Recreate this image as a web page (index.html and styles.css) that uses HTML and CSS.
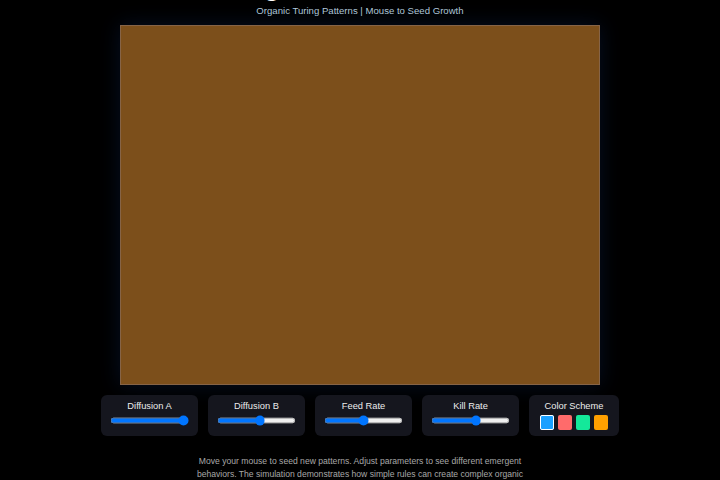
FILE: index.html
```html
<!DOCTYPE html>
<html lang="en">
<head>
    <meta charset="UTF-8">
    <meta name="viewport" content="width=device-width, initial-scale=1.0">
    <link rel="stylesheet" href="styles.css">
    <title>Living Reaction Diffusion</title>
</head>
<body>
    <div class="app">
        <h1 class="title">Living Reaction Diffusion</h1>
        <p class="subtitle">Organic Turing Patterns | Mouse to Seed Growth</p>

        <canvas class="sim" width="480" height="360"></canvas>

        <div class="controls">
            <div class="control">
                <label for="da">Diffusion A</label>
                <input type="range" id="da" min="0" max="100" value="100">
            </div>
            <div class="control">
                <label for="db">Diffusion B</label>
                <input type="range" id="db" min="0" max="100" value="55">
            </div>
            <div class="control">
                <label for="feed">Feed Rate</label>
                <input type="range" id="feed" min="0" max="100" value="50">
            </div>
            <div class="control">
                <label for="kill">Kill Rate</label>
                <input type="range" id="kill" min="0" max="100" value="58">
            </div>
            <div class="control scheme">
                <label>Color Scheme</label>
                <div class="swatches">
                    <button class="swatch blue active"></button>
                    <button class="swatch red"></button>
                    <button class="swatch green"></button>
                    <button class="swatch orange"></button>
                </div>
            </div>
        </div>

        <p class="info">Move your mouse to seed new patterns. Adjust parameters to see different emergent behaviors. The simulation demonstrates how simple rules can create complex organic structures.</p>
    </div>
</body>
</html>
```

FILE: styles.css
```css
body {
    margin: 0;
    height: 100vh;
    display: flex;
    justify-content: center;
    align-items: center;
    background: #000;
    color: #fff;
    font-family: "Liberation Sans", Arial, sans-serif;
}
.app {
    display: flex;
    flex-direction: column;
    align-items: center;
}
.title {
    margin: 0 0 2px;
    font-size: 26px;
    font-weight: bold;
}
.subtitle {
    margin: 0 0 9px;
    font-size: 9.6px;
    color: #b3cadb;
}
.sim {
    display: block;
    box-sizing: border-box;
    width: 480px;
    height: 360px;
    background: #7c4f1b;
    border: 1px solid #866447;
    box-shadow: 0 0 20px rgba(20, 60, 140, .25);
}
.controls {
    display: flex;
    gap: 10px;
    margin-top: 10px;
}
.control {
    width: 97px;
    height: 41px;
    box-sizing: border-box;
    padding: 6px 8px 0;
    background: #15161e;
    border-radius: 6px;
    display: flex;
    flex-direction: column;
    align-items: center;
    gap: 4px;
}
.control.scheme {
    width: 90px;
}
.control label {
    font-size: 9.3px;
    color: #ececec;
}
/* default chrome slider, shrunk to fit the small panels */
.control input[type=range] {
    zoom: .66;
    width: 119px;
    height: 16px;
    margin: 0;
}
.swatches {
    display: flex;
    gap: 4px;
}
.swatch {
    width: 14px;
    height: 15px;
    padding: 0;
    border: none;
    border-radius: 2px;
}
.swatch.active {
    outline: 1px solid #fff;
    outline-offset: -1px;
}
.blue { background: #1aa0ff; }
.red { background: #ff6b6b; }
.green { background: #14e89a; }
.orange { background: #ffa000; }
.info {
    margin: 19px 0 14px;
    max-width: 335px;
    text-align: center;
    font-size: 8.6px;
    line-height: 13px;
    color: #a8a8a8;
}
```
